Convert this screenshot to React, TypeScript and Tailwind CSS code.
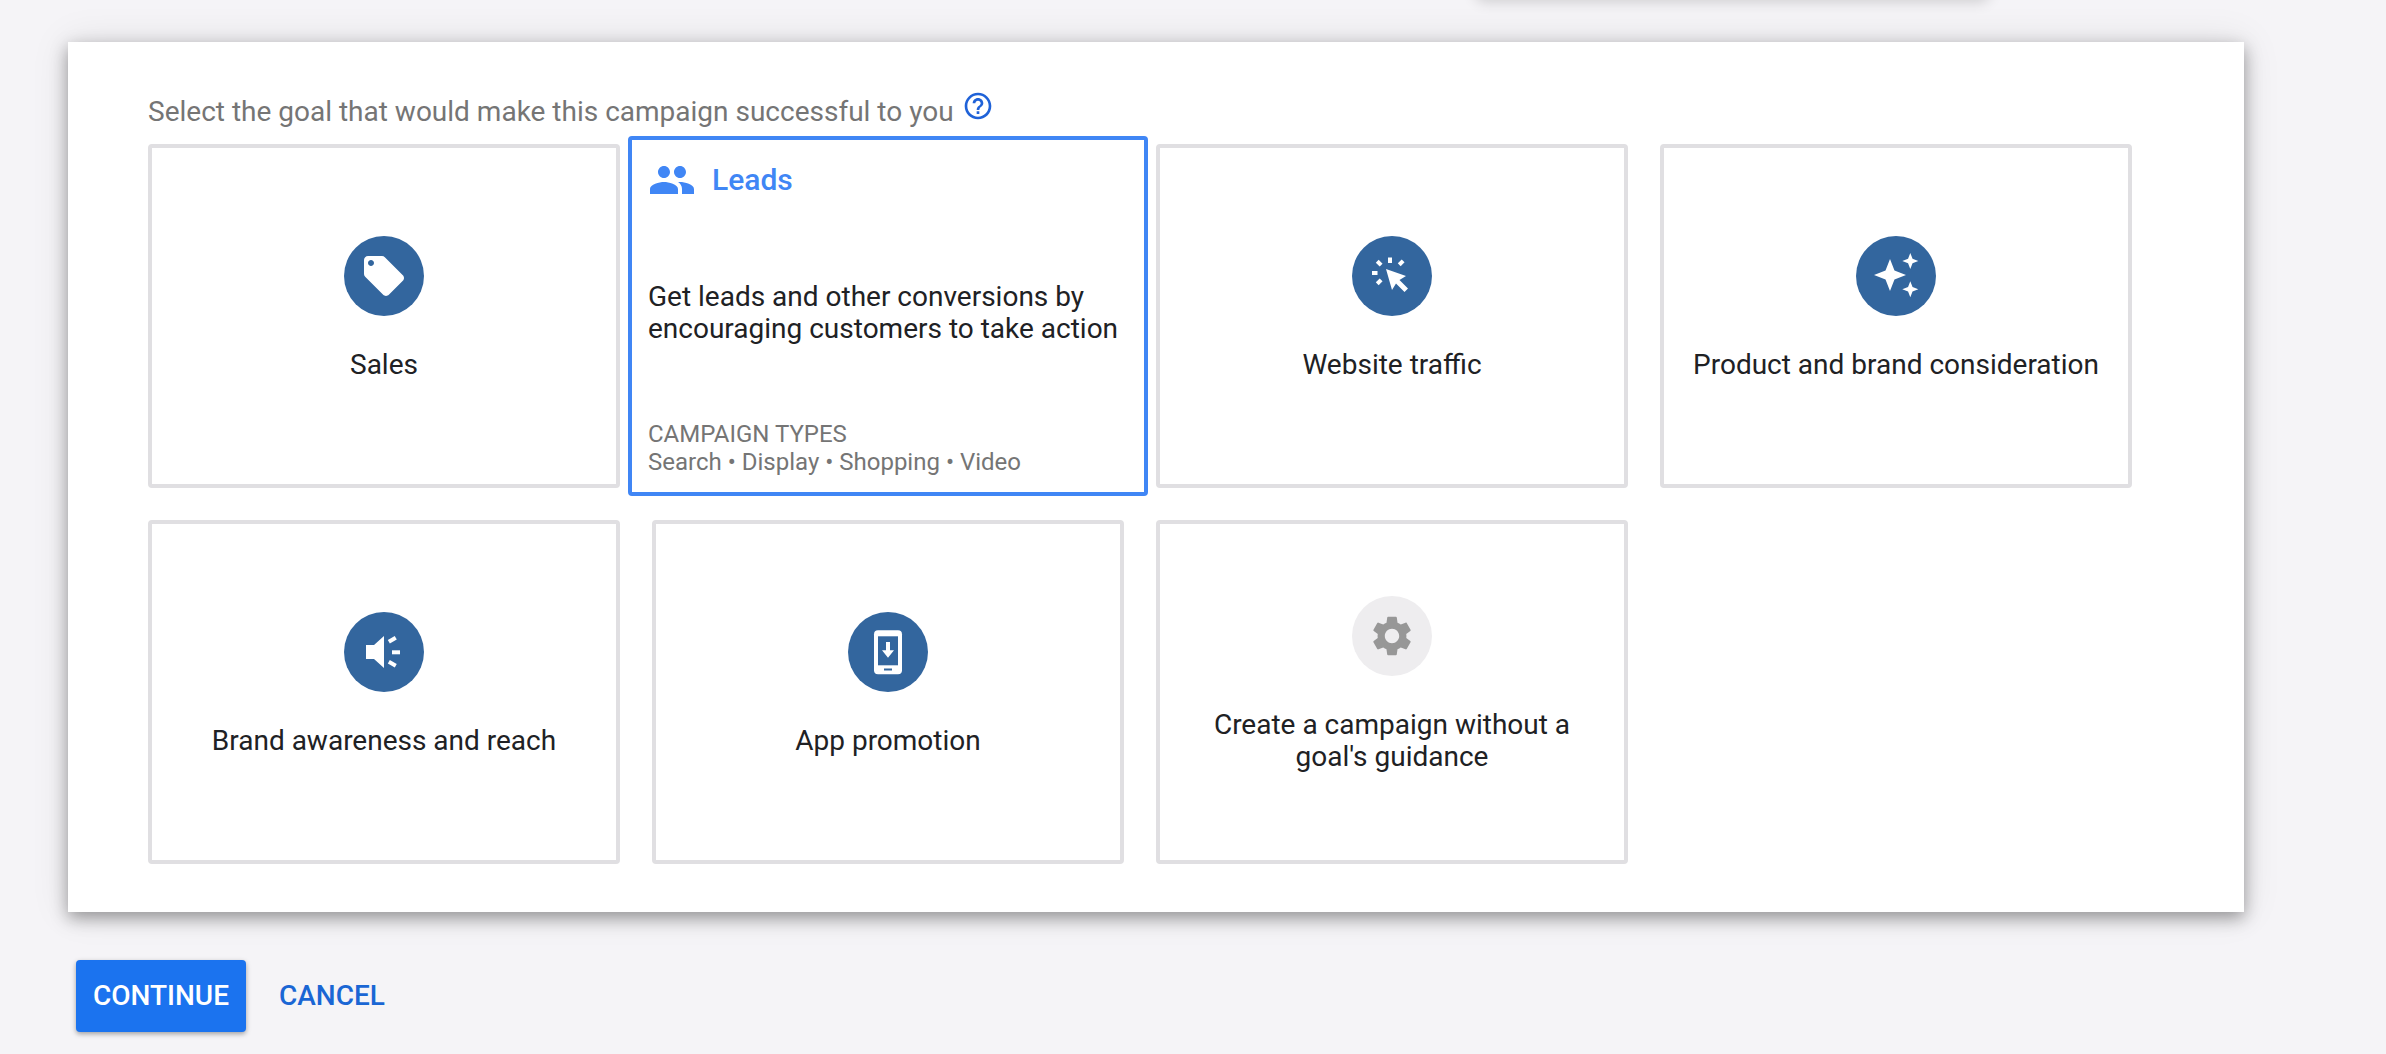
import type { ReactNode } from "react";

const star = (cx: number, cy: number, r: number) => {
  const k = r * 0.28;
  return `${cx},${cy - r} ${cx + k},${cy - k} ${cx + r},${cy} ${cx + k},${cy + k} ${cx},${cy + r} ${cx - k},${cy + k} ${cx - r},${cy} ${cx - k},${cy - k}`;
};

function TagIcon() {
  return (
    <svg viewBox="0 0 24 24" className="h-12 w-12 fill-white">
      <path d="M21.41 11.58l-9-9C12.05 2.22 11.55 2 11 2H4c-1.1 0-2 .9-2 2v7c0 .55.22 1.05.59 1.42l9 9c.36.36.86.58 1.41.58.55 0 1.05-.22 1.41-.59l7-7c.37-.36.59-.86.59-1.41 0-.55-.23-1.06-.59-1.42zM5.5 7C4.67 7 4 6.33 4 5.5S4.67 4 5.5 4 7 4.67 7 5.5 6.33 7 5.5 7z" />
    </svg>
  );
}

function ClickIcon() {
  return (
    <svg viewBox="0 0 80 80" className="h-20 w-20 fill-white">
      <polygon points="34,33 54,40 47.5,44 56,52.5 52.5,56 44,47.5 40,54" />
      <rect x="36" y="21.5" width="4" height="5.5" />
      <rect x="20" y="35" width="5.5" height="4" />
      <rect x="24.5" y="25" width="5.5" height="4" transform="rotate(45 27 27)" />
      <rect x="46.5" y="25" width="5.5" height="4" transform="rotate(-45 49 27)" />
      <rect x="24.5" y="44" width="5.5" height="4" transform="rotate(-45 27 46)" />
    </svg>
  );
}

function SparkleIcon() {
  return (
    <svg viewBox="0 0 80 80" className="h-20 w-20 fill-white">
      <polygon points={star(34, 39, 16)} />
      <polygon points={star(54.3, 25, 8)} />
      <polygon points={star(54.3, 53.3, 8)} />
    </svg>
  );
}

function SpeakerIcon() {
  return (
    <svg viewBox="0 0 80 80" className="h-20 w-20 fill-white">
      <polygon points="22,33 30,33 40,24 40,56 30,47 22,47" />
      <rect x="48" y="38.3" width="8" height="4" />
      <rect x="44.3" y="25.7" width="8" height="4" transform="rotate(-30 48.3 27.7)" />
      <rect x="44.3" y="49.7" width="8" height="4" transform="rotate(30 48.3 51.7)" />
    </svg>
  );
}

function PhoneIcon() {
  return (
    <svg viewBox="0 0 80 80" className="h-20 w-20">
      <rect x="26" y="18.3" width="28" height="44" rx="4" className="fill-white" />
      <rect x="30" y="24.3" width="20" height="29" className="fill-[#33669e]" />
      <rect x="36" y="56.5" width="8" height="2" className="fill-[#33669e]" />
      <polygon points="38,30 42,30 42,38.3 46,38.3 40,45.7 34,38.3 38,38.3" className="fill-white" />
    </svg>
  );
}

function GearIcon() {
  return (
    <svg viewBox="0 0 24 24" className="h-12 w-12 fill-[#979797]">
      <path d="M19.14 12.94c.04-.3.06-.61.06-.94 0-.32-.02-.64-.07-.94l2.03-1.58c.18-.14.23-.41.12-.61l-1.92-3.32c-.12-.22-.37-.29-.59-.22l-2.39.96c-.5-.38-1.03-.7-1.62-.94l-.36-2.54c-.04-.24-.24-.41-.48-.41h-3.84c-.24 0-.43.17-.47.41l-.36 2.54c-.59.24-1.13.57-1.62.94l-2.39-.96c-.22-.08-.47 0-.59.22L2.74 8.87c-.12.21-.08.47.12.61l2.03 1.58c-.05.3-.09.63-.09.94s.02.64.07.94l-2.03 1.58c-.18.14-.23.41-.12.61l1.92 3.32c.12.22.37.29.59.22l2.39-.96c.5.38 1.03.7 1.62.94l.36 2.54c.05.24.24.41.48.41h3.84c.24 0 .44-.17.47-.41l.36-2.54c.59-.24 1.13-.56 1.62-.94l2.39.96c.22.08.47 0 .59-.22l1.92-3.32c.12-.22.07-.47-.12-.61l-2.01-1.58zM12 15.6c-1.98 0-3.6-1.62-3.6-3.6s1.62-3.6 3.6-3.6 3.6 1.62 3.6 3.6-1.62 3.6-3.6 3.6z" />
    </svg>
  );
}

function GoalCard({ icon, label, muted }: { icon: ReactNode; label: string; muted?: boolean }) {
  return (
    <div className="flex h-[344px] flex-col items-center justify-center rounded-[4px] border-4 border-[#e0dfe2] bg-white px-7 pb-[15px] text-center">
      <div
        className={
          muted
            ? "flex h-20 w-20 items-center justify-center rounded-full bg-[#eeedef]"
            : "flex h-20 w-20 items-center justify-center rounded-full bg-[#33669e]"
        }
      >
        {icon}
      </div>
      <p className="mt-[33px] text-[28px] leading-8 text-[#202124]">{label}</p>
    </div>
  );
}

function LeadsCard() {
  return (
    <div className="-mx-6 -my-2 flex h-[360px] flex-col rounded-[4px] border-4 border-[#4086f5] bg-white pl-4 pr-2">
      <div className="mt-4 flex items-center">
        <svg viewBox="0 0 24 24" className="h-12 w-12 fill-[#4086f5]">
          <path d="M16 11c1.66 0 2.99-1.34 2.99-3S17.66 5 16 5c-1.66 0-3 1.34-3 3s1.34 3 3 3zm-8 0c1.66 0 2.99-1.34 2.99-3S9.66 5 8 5C6.34 5 5 6.34 5 8s1.34 3 3 3zm0 2c-2.33 0-7 1.17-7 3.5V19h14v-2.5c0-2.33-4.67-3.5-7-3.5zm8 0c-.29 0-.62.02-.97.05 1.16.84 1.97 1.97 1.97 3.45V19h6v-2.5c0-2.33-4.67-3.5-7-3.5z" />
        </svg>
        <span className="ml-4 text-[30px] font-medium leading-8 text-[#4086f5]">Leads</span>
      </div>
      <p className="mt-[77px] text-[28px] leading-8 text-[#202124]">
        Get leads and other conversions by
        <br />
        encouraging customers to take action
      </p>
      <div className="mt-auto mb-4 text-[24px] leading-7 text-[#757575]">
        <p>CAMPAIGN TYPES</p>
        <p>Search • Display • Shopping • Video</p>
      </div>
    </div>
  );
}

export default function App() {
  return (
    <div className="relative h-[1054px] overflow-hidden bg-[#f5f4f7] font-['Roboto',sans-serif]">
      {/* edge of whatever sits above the fold */}
      <div className="absolute -top-5 left-[1475px] h-5 w-[515px] rounded-full shadow-[0_2px_14px_rgba(0,0,0,0.16)]" />

      <div className="ml-[68px] mt-[42px] h-[870px] w-[2176px] bg-white pl-20 pt-[50px] shadow-[0_6px_16px_rgba(0,0,0,0.36),0_0_36px_rgba(0,0,0,0.1)]">
        <div className="mb-3 flex h-10 items-center">
          <span className="text-[28px] leading-10 text-[#757575]">
            Select the goal that would make this campaign successful to you
          </span>
          <svg viewBox="0 0 24 24" className="mb-3 ml-2 h-8 w-8 fill-[#1f62d8]">
            <path d="M11 18h2v-2h-2v2zm1-16C6.48 2 2 6.48 2 12s4.48 10 10 10 10-4.48 10-10S17.52 2 12 2zm0 18c-4.41 0-8-3.59-8-8s3.59-8 8-8 8 3.59 8 8-3.59 8-8 8zm0-14c-2.21 0-4 1.79-4 4h2c0-1.1.9-2 2-2s2 .9 2 2c0 2-3 1.75-3 5h2c0-2.25 3-2.5 3-5 0-2.21-1.79-4-4-4z" />
          </svg>
        </div>

        <div className="grid grid-cols-[repeat(4,472px)] gap-x-8 gap-y-8">
          <GoalCard icon={<TagIcon />} label="Sales" />
          <LeadsCard />
          <GoalCard icon={<ClickIcon />} label="Website traffic" />
          <GoalCard icon={<SparkleIcon />} label="Product and brand consideration" />
          <GoalCard icon={<SpeakerIcon />} label="Brand awareness and reach" />
          <GoalCard icon={<PhoneIcon />} label="App promotion" />
          <GoalCard icon={<GearIcon />} label="Create a campaign without a goal's guidance" muted />
        </div>
      </div>

      <div className="ml-[76px] mt-12 flex items-center">
        <button className="flex h-[72px] w-[170px] items-center justify-center rounded-[4px] bg-[#1b73ef] text-[28px] font-medium text-white shadow-[0_2px_5px_rgba(0,0,0,0.35)]">
          CONTINUE
        </button>
        <button className="ml-[33px] text-[28px] font-medium text-[#1a66d4]">CANCEL</button>
      </div>
    </div>
  );
}
